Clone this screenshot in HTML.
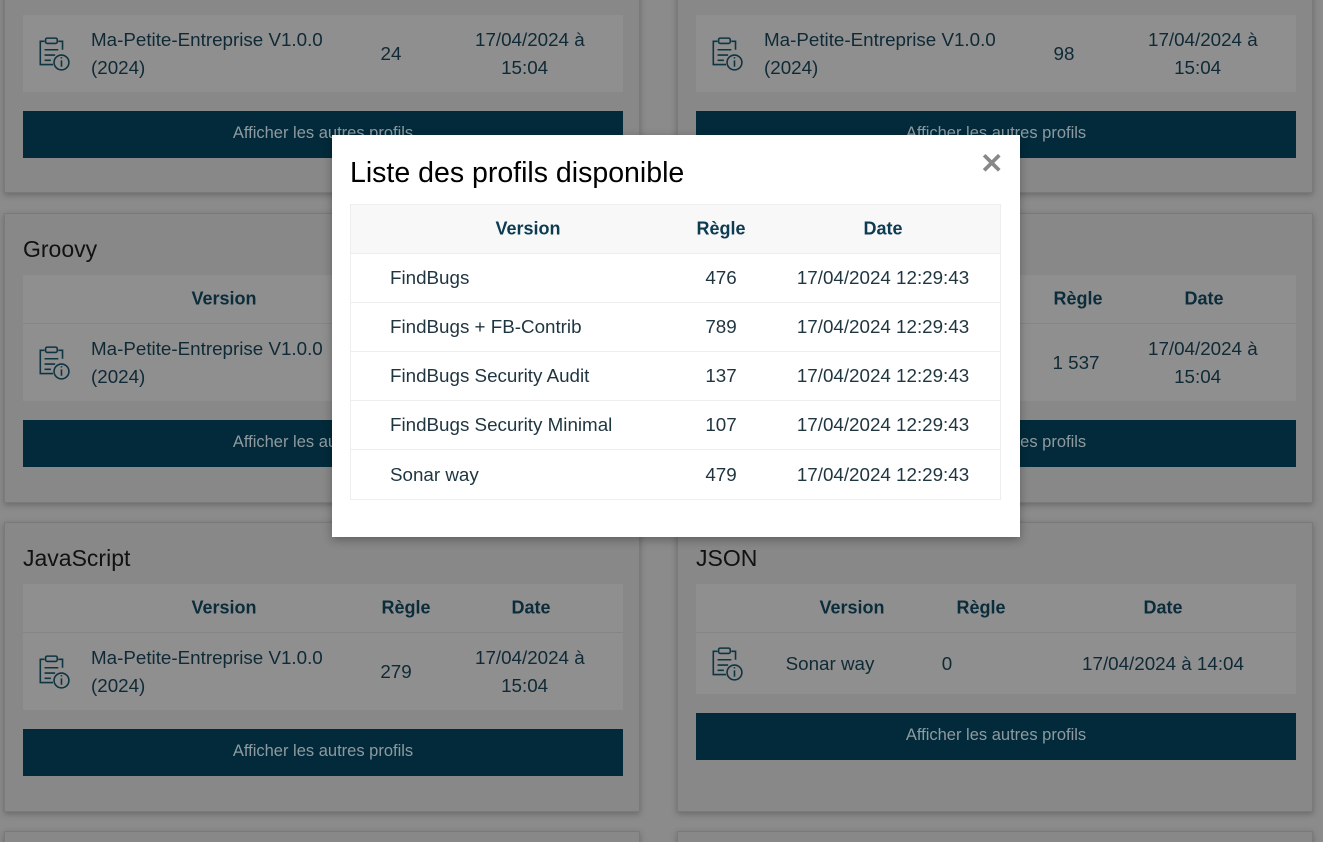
<!DOCTYPE html>
<html><head><meta charset="utf-8"><style>
*{box-sizing:border-box;margin:0;padding:0}
html,body{width:1323px;height:842px;overflow:hidden}
body{background:#8b8b8b;font-family:"Liberation Sans",sans-serif;position:relative}
.card{position:absolute;width:636px;background:#888;border:1px solid #7a7a7a;box-shadow:0 2px 6px rgba(0,0,0,.25)}
.card h2{position:absolute;left:18px;font-weight:normal;font-size:23px;color:#111}
.tbl{position:absolute;left:18px;width:600px;background:#8f8f8f}
.th{height:49px;border-bottom:1px solid #858585;position:relative;color:#0b2c3b;font-weight:bold;font-size:18px}
.th span,.tr span{position:absolute;top:50%;transform:translate(-50%,-50%);white-space:nowrap}
.tr{height:77px;position:relative;color:#0f2a36;font-size:18.8px}
.tr span.l{transform:translate(0,-50%);line-height:28px}
.btn{position:absolute;left:18px;width:600px;height:47px;background:#022a3a;color:#8e9aa0;font-size:16.5px;text-align:center;line-height:45px}
.ic{position:absolute;left:12px;top:50%;transform:translateY(-50%)}
.modal{position:absolute;left:332px;top:135px;width:688px;height:402px;background:#fff;box-shadow:0 3px 9px rgba(0,0,0,.3)}
.modal h1{position:absolute;left:18px;top:22px;font-weight:normal;font-size:28.5px;color:#000}
.x{position:absolute;left:648px;top:12px;font-size:28px;color:#888;font-weight:bold}
.mt{position:absolute;left:18px;top:69px;width:651px;border:1px solid #eee}
.mh{height:49px;background:#f8f8f8;position:relative;color:#0c3b52;font-weight:bold;font-size:18px;border-bottom:1px solid #eee}
.mr{height:49px;position:relative;color:#1f3540;font-size:18.8px;border-bottom:1px solid #eee}
.mr:last-child{border-bottom:none}
.mh span,.mr span{position:absolute;top:50%;transform:translate(-50%,-50%);white-space:nowrap}
.mr span.l{left:39px;transform:translate(0,-50%)}
</style></head><body>
<svg width="0" height="0" style="position:absolute"><defs><g id="i" fill="none" stroke="#0f3442" stroke-width="1.5"><path d="M9 5H5v22h12M22 5h4v8"/><rect x="10" y="2" width="11" height="5" rx="1.5"/><path d="M9 13h13M9 18h10M9 23h6"/><circle cx="25" cy="25" r="7"/><path d="M25 23v6M25 20v1.2"/></g></defs></svg>

<div class="card" style="left:4px;top:-20px;height:213px">
<div class="tbl" style="top:34px;height:77px"><div class="tr"><svg class="ic" width="36" height="36" viewBox="0 0 34 34"><use href="#i"/></svg><span class="l" style="left:68px">Ma-Petite-Entreprise V1.0.0<br>(2024)</span><span style="left:368px">24</span><span class="l" style="left:452px">17/04/2024 à<br>&nbsp;&nbsp;&nbsp;&nbsp;&nbsp;15:04</span></div></div>
<div class="btn" style="top:130px">Afficher les autres profils</div></div>
<div class="card" style="left:677px;top:-20px;height:213px">
<div class="tbl" style="top:34px;height:77px"><div class="tr"><svg class="ic" width="36" height="36" viewBox="0 0 34 34"><use href="#i"/></svg><span class="l" style="left:68px">Ma-Petite-Entreprise V1.0.0<br>(2024)</span><span style="left:368px">98</span><span class="l" style="left:452px">17/04/2024 à<br>&nbsp;&nbsp;&nbsp;&nbsp;&nbsp;15:04</span></div></div>
<div class="btn" style="top:130px">Afficher les autres profils</div></div>

<div class="card" style="left:4px;top:213px;height:290px"><h2 style="top:22px">Groovy</h2>
<div class="tbl" style="top:61px"><div class="th"><span style="left:201px">Version</span><span style="left:383px">Règle</span><span style="left:508px">Date</span></div>
<div class="tr"><svg class="ic" width="36" height="36" viewBox="0 0 34 34"><use href="#i"/></svg><span class="l" style="left:68px">Ma-Petite-Entreprise V1.0.0<br>(2024)</span></div></div>
<div class="btn" style="top:206px">Afficher les autres profils</div></div>
<div class="card" style="left:677px;top:213px;height:290px">
<div class="tbl" style="top:61px"><div class="th"><span style="left:382px">Règle</span><span style="left:508px">Date</span></div>
<div class="tr"><span style="left:380px">1 537</span><span class="l" style="left:452px">17/04/2024 à<br>&nbsp;&nbsp;&nbsp;&nbsp;&nbsp;15:04</span></div></div>
<div class="btn" style="top:206px">Afficher les autres profils</div></div>

<div class="card" style="left:4px;top:522px;height:290px"><h2 style="top:22px">JavaScript</h2>
<div class="tbl" style="top:61px"><div class="th"><span style="left:201px">Version</span><span style="left:383px">Règle</span><span style="left:508px">Date</span></div>
<div class="tr"><svg class="ic" width="36" height="36" viewBox="0 0 34 34"><use href="#i"/></svg><span class="l" style="left:68px">Ma-Petite-Entreprise V1.0.0<br>(2024)</span><span style="left:373px">279</span><span class="l" style="left:452px">17/04/2024 à<br>&nbsp;&nbsp;&nbsp;&nbsp;&nbsp;15:04</span></div></div>
<div class="btn" style="top:206px">Afficher les autres profils</div></div>
<div class="card" style="left:677px;top:522px;height:290px"><h2 style="top:22px">JSON</h2>
<div class="tbl" style="top:61px"><div class="th"><span style="left:156px">Version</span><span style="left:285px">Règle</span><span style="left:467px">Date</span></div>
<div class="tr" style="height:61px"><svg class="ic" width="36" height="36" viewBox="0 0 34 34"><use href="#i"/></svg><span style="left:134px">Sonar way</span><span style="left:251px">0</span><span style="left:467px">17/04/2024 à 14:04</span></div></div>
<div class="btn" style="top:190px">Afficher les autres profils</div></div>

<div class="card" style="left:4px;top:831px;height:40px"></div>
<div class="card" style="left:677px;top:831px;height:40px"></div>

<div class="modal"><h1>Liste des profils disponible</h1><div class="x">✕</div>
<div class="mt"><div class="mh"><span style="left:177px">Version</span><span style="left:370px">Règle</span><span style="left:532px">Date</span></div>
<div class="mr"><span class="l">FindBugs</span><span style="left:370px">476</span><span style="left:532px">17/04/2024 12:29:43</span></div>
<div class="mr"><span class="l">FindBugs + FB-Contrib</span><span style="left:370px">789</span><span style="left:532px">17/04/2024 12:29:43</span></div>
<div class="mr"><span class="l">FindBugs Security Audit</span><span style="left:370px">137</span><span style="left:532px">17/04/2024 12:29:43</span></div>
<div class="mr"><span class="l">FindBugs Security Minimal</span><span style="left:370px">107</span><span style="left:532px">17/04/2024 12:29:43</span></div>
<div class="mr"><span class="l">Sonar way</span><span style="left:370px">479</span><span style="left:532px">17/04/2024 12:29:43</span></div>
</div></div>
</body></html>
